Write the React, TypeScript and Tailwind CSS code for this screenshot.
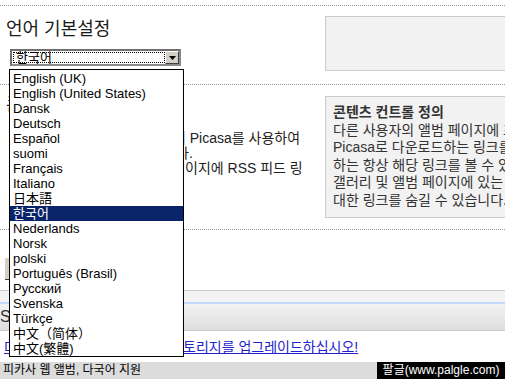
import React from "react";

const languages = [
  "English (UK)",
  "English (United States)",
  "Dansk",
  "Deutsch",
  "Español",
  "suomi",
  "Français",
  "Italiano",
  "日本語",
  "한국어",
  "Nederlands",
  "Norsk",
  "polski",
  "Português (Brasil)",
  "Русский",
  "Svenska",
  "Türkçe",
  "中文（简体）",
  "中文(繁體)",
];

function SelectBox() {
  return (
    <div className="ml-[10px] flex h-[17px] w-[171px] border-2 border-t-[#6f6f6f] border-l-[#6f6f6f] border-r-[#8a8a8a] border-b-[#8a8a8a] bg-white">
      <div className="my-[1px] ml-[1px] flex flex-1 items-center border border-dotted border-black pl-[2px] text-[13px] leading-[11px] text-black">
        한국어
      </div>
      <div className="flex w-[14px] items-center justify-center border border-t-white border-l-white border-r-[#404040] border-b-[#404040] bg-[#d4d0c8]">
        <svg width="7" height="4" viewBox="0 0 7 4">
          <path d="M0 0H7L3.5 4Z" fill="#000" />
        </svg>
      </div>
    </div>
  );
}

function DropdownList() {
  return (
    <ul className="absolute left-[9px] top-[69px] w-[175px] border border-black bg-white pt-[1px] text-[13px] text-black">
      {languages.map((l) => (
        <li
          key={l}
          className={
            l === "한국어"
              ? "h-[15px] whitespace-nowrap bg-[#0a246a] pl-[3px] leading-[15px] text-white"
              : "h-[15px] whitespace-nowrap pl-[3px] leading-[15px]"
          }
        >
          {l}
        </li>
      ))}
    </ul>
  );
}

function HiddenLine({ hidden, shown, w }: { hidden: string; shown: string; w: string }) {
  return (
    <div className="flex h-[15px] whitespace-nowrap pl-[12px] leading-[15px]">
      <span className={`${w} shrink-0 overflow-hidden text-right`}>{hidden}</span>
      <span>{shown}</span>
    </div>
  );
}

export default function App() {
  return (
    <div className="relative h-[379px] w-[505px] overflow-hidden bg-white font-['Liberation_Sans','Noto_Sans_CJK_KR',sans-serif] text-[13px] text-[#222]">
      <div className="flex h-full flex-col">
        <div className="h-[5px] shrink-0" />
        {/* Section 1: language preference */}
        <section className="flex h-[80px] shrink-0 border-y border-dotted border-[#999]">
          <div className="w-[325px] shrink-0">
            <h2 className="ml-[6px] mt-[12px] text-[18px] font-normal leading-[22px] text-[#1a1a1a]">
              언어 기본설정
            </h2>
            <div className="mt-[9px]">
              <SelectBox />
            </div>
          </div>
          <div className="mt-[10px] h-[55px] w-[200px] shrink-0 border border-[#cccccc] bg-[#f2f2f2]" />
        </section>

        {/* Section 2: content control */}
        <section className="flex h-[145px] shrink-0 border-b border-dotted border-[#999]">
          <div className="w-[325px] shrink-0">
            <h2 className="ml-[6px] mt-[9px] text-[18px] font-normal leading-[22px] text-[#1a1a1a]">
              콘텐츠 컨트롤
            </h2>
            <div className="mt-[15px] text-[14px] text-[#222]">
              <HiddenLine w="w-[161px]" hidden="공개 앨범을 보는 사용자가 앨범을 다운로드할 때" shown="이 Picasa를 사용하여" />
              <HiddenLine w="w-[164px]" hidden="다운로드할 수 있도록 허용합니" shown="다." />
              <HiddenLine w="w-[173px]" hidden="또한 갤러리 및 앨범 페" shown="이지에 RSS 피드 링" />
            </div>
          </div>
          <div className="mt-[11px] h-[122px] w-[200px] shrink-0 border border-[#cccccc] bg-[#f2f2f2] px-[7px] pt-[7px] text-[14px] leading-[17.6px] text-[#333]">
            <div className="whitespace-nowrap font-bold">콘텐츠 컨트롤 정의</div>
            <div className="whitespace-nowrap">다른 사용자의 앨범 페이지에 표시되는</div>
            <div className="whitespace-nowrap">Picasa로 다운로드하는 링크를 표시</div>
            <div className="whitespace-nowrap">하는 항상 해당 링크를 볼 수 있도록</div>
            <div className="whitespace-nowrap">갤러리 및 앨범 페이지에 있는 RSS</div>
            <div className="whitespace-nowrap">대한 링크를 숨길 수 있습니다.</div>
          </div>
        </section>

        {/* Section 3: save button */}
        <section className="h-[60px] shrink-0">
          <button className="ml-[5px] mt-[28px] h-[22px] w-[70px] border-b border-[#404040] bg-[#d4d0c8] text-[12px] text-black">
            저장
          </button>
        </section>

        {/* Band */}
        <div className="shrink-0 border-y border-[#cccccc]">
          <div className="h-[11px] bg-[#f3f3f3]" />
          <div className="h-[2px] bg-[#c3d9ff]" />
          <div className="flex h-[26px] items-center bg-gradient-to-b from-[#f2f2f2] to-[#dedede] text-[16px] text-[#333]">
            Settings
          </div>
        </div>

        {/* Link row */}
        <div className="flex h-[31px] shrink-0 items-center pl-[4px] pt-[1px]">
          <a href="#" className="flex whitespace-nowrap text-[14px] leading-[15px] text-[#2222cc] underline">
            <span className="w-[179px] shrink-0 overflow-hidden">더 많은 공간이 필요하십니까? 스</span>
            <span>토리지를 업그레이드하십시오!</span>
          </a>
        </div>

        {/* Footer bar */}
        <div className="flex h-[17px] shrink-0 items-center justify-between bg-[#dcdcdc]">
          <span className="pl-[3px] text-[12px] leading-[17px] text-black">피카사 웹 앨범, 다국어 지원</span>
          <span className="flex h-full w-[128px] items-center justify-center bg-black text-[12px] leading-[17px] text-white">
            팔글(www.palgle.com)
          </span>
        </div>
      </div>

      <DropdownList />
    </div>
  );
}
